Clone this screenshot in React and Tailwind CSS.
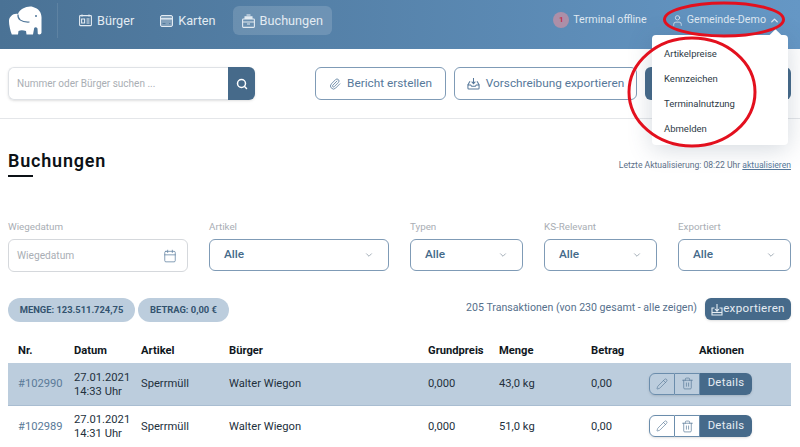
import React from "react";
import { Search, Paperclip, Calendar, ChevronDown, ChevronUp, Pencil, Trash2, User } from "lucide-react";

const BuergerIcon = () => (
  <svg width="13" height="13" viewBox="0 0 13 13" fill="none" stroke="currentColor" strokeWidth="1.1">
    <rect x="0.6" y="1.6" width="11.8" height="10" rx="0.8" />
    <path d="M3 0.5v2M10 0.5v2" />
    <path d="M2.6 5h3v4h-3zM7.5 5h3M7.5 7h3M7.5 9h3" />
  </svg>
);

const KartenIcon = () => (
  <svg width="13" height="12" viewBox="0 0 13 12">
    <rect x="0.5" y="0.5" width="12" height="11" rx="1.5" fill="currentColor" fillOpacity="0.35" stroke="currentColor" />
    <path d="M0.5 3.8h12" stroke="currentColor" strokeWidth="1.4" />
    <path d="M2.5 8.6h3M9 8.6h1.5" stroke="#4f7699" strokeWidth="1" />
  </svg>
);

const BuchungenIcon = () => (
  <svg width="13" height="14" viewBox="0 0 13 14" fill="none" stroke="currentColor" strokeWidth="1.1">
    <rect x="0.6" y="5" width="11.8" height="8.4" rx="0.8" />
    <path d="M0.6 8h11.8M5 10h3" />
    <path d="M3 5V2.8h7V5" fill="currentColor" />
    <path d="M4.5 1h4" />
  </svg>
);

const InboxIcon = () => (
  <svg width="13" height="13" viewBox="0 0 14 14" fill="none" stroke="currentColor" strokeWidth="1.1">
    <path d="M1 8v4a1 1 0 0 0 1 1h10a1 1 0 0 0 1-1V8" />
    <path d="M1 8.500h3l1 1.500h4l1-1.500h3" />
    <path d="M7 1v6M5 5L7 7.200 9 5" />
    <path d="M3.500 5H2.800L1 8.500M10.500 5h.7L13 8.500" />
  </svg>
);

const TrayIcon = () => (
  <svg width="12" height="13" viewBox="0 0 12 13" fill="none" stroke="currentColor" strokeWidth="1.1" className="shrink-0">
    <path d="M3.500 5H1v7h10V5H8.500" />
    <path d="M6 1v7M4 6l2 2.200L8 6" />
    <path d="M1 9.500h10" />
  </svg>
);

const Elephant = () => (
  <svg width="34" height="30" viewBox="7 4 34 30" className="shrink-0">
    <path
      d="M17 12C19 6.500 27 3.500 32 5C38 6.500 41 11 40.500 17L40.500 30.500C40.500 32.500 38 33 36.800 32L36.500 26.500C35.500 25 34 25 33.200 26L32 32.500L25.500 32.500L25 29C22 28 19.500 28 17.500 29L17 32.500L10.800 32.500C9 28 7.800 22 8 18.500C8.200 15 12 11 17 12Z"
      fill="#fff"
    />
    <path d="M17 12.500C16.500 17 20 20.500 28.500 20" fill="none" stroke="#4f7699" strokeWidth="1.2" />
    <circle cx="35" cy="14" r="1" fill="#4f7699" />
  </svg>
);

const NavItem = ({ icon, label, active }) => (
  <div className={`flex items-center gap-[5px] h-[29px] px-[9px] rounded-md text-[#e3ebf2] text-[12.700px] ${active ? "bg-white/15" : ""}`}>
    {icon}
    <span>{label}</span>
  </div>
);

const Filter = ({ label, width, children }) => (
  <div className={`flex flex-col gap-[5px] ${width}`}>
    <span className="text-[9.800px] leading-[14px] text-[#a9aeb4]">{label}</span>
    {children}
  </div>
);

const SelectBox = () => (
  <div className="flex items-center justify-between h-[32px] px-[14px] border border-[#7f9bb6] rounded-md text-[11.800px] font-medium text-[#456a8a]">
    <span>Alle</span>
    <ChevronDown size={10} strokeWidth={1.500} className="text-[#6f7f8f]" />
  </div>
);

const Row = ({ nr, zeit, menge, selected }) => (
  <tr className={`h-[42px] text-[11.200px] text-[#23303c] border-b border-[#a9bdd1] ${selected ? "bg-[#bccddd]" : ""}`}>
    <td className="pl-[10px] pt-[2px] text-[#5a7a98]">{nr}</td>
    <td className="pt-[2px] leading-[14px]">27.01.2021<br />{zeit}</td>
    <td className="pt-[2px]">Sperrmüll</td>
    <td className="pt-[2px]">Walter Wiegon</td>
    <td className="pt-[2px]">0,000</td>
    <td className="pt-[2px]">{menge}</td>
    <td className="pt-[2px]">0,00</td>
    <td>
      <div className="flex h-[22px] w-[103px] shadow-sm rounded-md">
        <div className="flex items-center justify-center w-[26px] border border-[#6b8dac] rounded-l-md text-[#5a7a98]">
          <Pencil size={12} strokeWidth={1.300} />
        </div>
        <div className="flex items-center justify-center w-[25px] border-y border-r border-[#6b8dac] text-[#5a7a98]">
          <Trash2 size={13} strokeWidth={1.300} />
        </div>
        <div className="flex items-center justify-center flex-1 bg-[#466a8a] rounded-r-md text-[11.300px] tracking-[0.3px] text-[#e6edf3]">
          Details
        </div>
      </div>
    </td>
  </tr>
);

export default function App() {
  return (
    <div className="relative w-[800px] h-[447px] overflow-hidden bg-white font-['Roboto',sans-serif]">
      <header className="flex items-center justify-between h-[49px] pb-[8px] pl-[8px] pr-[20px] bg-gradient-to-r from-[#4a7295] to-[#6597c5]">
        <div className="flex items-center">
          <Elephant />
          <div className="w-px h-[35px] ml-[15px] mr-[12px] bg-white/10" />
          <nav className="flex gap-[8px]">
            <NavItem icon={<BuergerIcon />} label="Bürger" />
            <NavItem icon={<KartenIcon />} label="Karten" />
            <NavItem icon={<BuchungenIcon />} label="Buchungen" active />
          </nav>
        </div>
        <div className="flex items-center text-[10.700px] text-[#dfe8f1]">
          <span className="flex items-center justify-center w-[16px] h-[16px] mr-[4px] rounded-full bg-[#ad8fa8] text-[8px] font-bold text-[#c2324a]">1</span>
          <span>Terminal offline</span>
          <User size={13} strokeWidth={1.500} className="ml-[24px] mr-[3px]" />
          <span>Gemeinde-Demo</span>
          <ChevronUp size={11} strokeWidth={3} className="ml-[3px]" />
        </div>
      </header>

      <section className="flex items-start justify-between h-[70px] pt-[18px] pl-[8px] pr-[9px] border-b border-[#e4e6e9]">
        <div className="flex w-[247px] h-[33px] shadow-sm rounded-md">
          <div className="flex items-center flex-1 pl-[8px] border border-r-0 border-[#dfe2e6] rounded-l-md text-[10px] text-[#a9aeb4]">
            Nummer oder Bürger suchen ...
          </div>
          <div className="flex items-center justify-center w-[27px] bg-[#466a8a] rounded-r-md text-white">
            <Search size={12} strokeWidth={3} />
          </div>
        </div>
        <div className="flex gap-[8px]">
          <div className="flex items-center justify-center gap-[6px] w-[131px] h-[33px] border border-[#7f9bb6] rounded-md text-[11.800px] text-[#56789a]">
            <Paperclip size={12} strokeWidth={1.600} />
            Bericht erstellen
          </div>
          <div className="flex items-center justify-center gap-[6px] w-[183px] h-[33px] border border-[#7f9bb6] rounded-md text-[11.800px] text-[#56789a]">
            <InboxIcon />
            Vorschreibung exportieren
          </div>
          <div className="w-[146px] h-[33px] bg-[#466a8a] rounded-md" />
        </div>
      </section>

      <section className="flex items-start justify-between pt-[31px] pl-[8px] pr-[9px]">
        <div>
          <h1 className="text-[18px] leading-[22px] font-semibold tracking-[0.8px] text-[#0c1116]">Buchungen</h1>
          <div className="w-[25px] h-[2px] mt-[3px] bg-[#0c1116]" />
        </div>
        <p className="mt-[9px] text-[8.600px] text-[#5d7089]">
          Letzte Aktualisierung: 08:22 Uhr <span className="underline text-[#56789a]">aktualisieren</span>
        </p>
      </section>

      <section className="flex gap-[21px] mt-[43px] pl-[8px] pr-[9px]">
        <Filter label="Wiegedatum" width="w-[180px]">
          <div className="flex items-center justify-between h-[33px] px-[8px] pr-[10px] pt-[1px] border border-[#d5d8dc] rounded-md text-[10.200px] text-[#a9aeb4]">
            <span>Wiegedatum</span>
            <Calendar size={14} strokeWidth={1.300} className="text-[#5f80a0]" />
          </div>
        </Filter>
        <Filter label="Artikel" width="w-[180px]"><SelectBox /></Filter>
        <Filter label="Typen" width="w-[113px]"><SelectBox /></Filter>
        <Filter label="KS-Relevant" width="w-[113px]"><SelectBox /></Filter>
        <Filter label="Exportiert" width="w-[113px]"><SelectBox /></Filter>
      </section>

      <section className="flex items-start justify-between mt-[26px] pl-[8px] pr-[9px]">
        <div className="flex gap-[3px] text-[9.400px] font-bold text-[#33536f]">
          <span className="flex items-center justify-center w-[127px] h-[24px] rounded-full bg-[#bccddd]">MENGE: 123.511.724,75</span>
          <span className="flex items-center justify-center w-[91px] h-[24px] rounded-full bg-[#bccddd]">BETRAG: 0,00 €</span>
        </div>
        <div className="flex items-start gap-[8px]">
          <span className="mt-[2px] text-[10.600px] leading-[16px] text-[#56708c]">205 Transaktionen (von 230 gesamt - alle zeigen)</span>
          <div className="flex items-center justify-center w-[86px] h-[22px] bg-[#466a8a] rounded-md shadow-sm text-[11.600px] tracking-[0.3px] text-[#e6edf3]">
            <TrayIcon />
            exportieren
          </div>
        </div>
      </section>

      <table className="table-fixed w-[783px] ml-[8px] mt-[17px] border-collapse">
        <colgroup>
          <col className="w-[66px]" />
          <col className="w-[67px]" />
          <col className="w-[88px]" />
          <col className="w-[199px]" />
          <col className="w-[71px]" />
          <col className="w-[92px]" />
          <col className="w-[58px]" />
          <col />
        </colgroup>
        <thead>
          <tr className="h-[24px] text-left text-[11.200px] text-[#10171d]">
            <th className="pl-[10px] font-bold">Nr.</th>
            <th className="font-bold">Datum</th>
            <th className="font-bold">Artikel</th>
            <th className="font-bold">Bürger</th>
            <th className="font-bold">Grundpreis</th>
            <th className="font-bold">Menge</th>
            <th className="font-bold">Betrag</th>
            <th className="pl-[50px] font-bold">Aktionen</th>
          </tr>
        </thead>
        <tbody>
          <Row nr="#102990" zeit="14:33 Uhr" menge="43,0 kg" selected />
          <Row nr="#102989" zeit="14:31 Uhr" menge="51,0 kg" />
        </tbody>
      </table>

      {/* dropdown + markierungen liegen über der seite */}
      <div className="absolute left-[652px] top-[35px] w-[136px] h-[110px] pt-[11px] pl-[12px] bg-white rounded-sm shadow-[0_4px_24px_rgba(60,80,110,0.22)] text-[9.500px] text-[#2e3a46]">
        <div className="absolute -top-[4px] right-[8px] w-[9px] h-[9px] rotate-45 bg-white" />
        <div className="flex flex-col gap-[10px] leading-[15px]">
          <span>Artikelpreise</span>
          <span>Kennzeichen</span>
          <span>Terminalnutzung</span>
          <span>Abmelden</span>
        </div>
      </div>
      <svg className="absolute inset-0 pointer-events-none" width="800" height="447" fill="none" stroke="#e3101e" strokeWidth="3">
        <ellipse cx="724" cy="19.500" rx="59.500" ry="16.500" />
        <ellipse cx="692" cy="92" rx="63" ry="54" />
      </svg>
    </div>
  );
}
